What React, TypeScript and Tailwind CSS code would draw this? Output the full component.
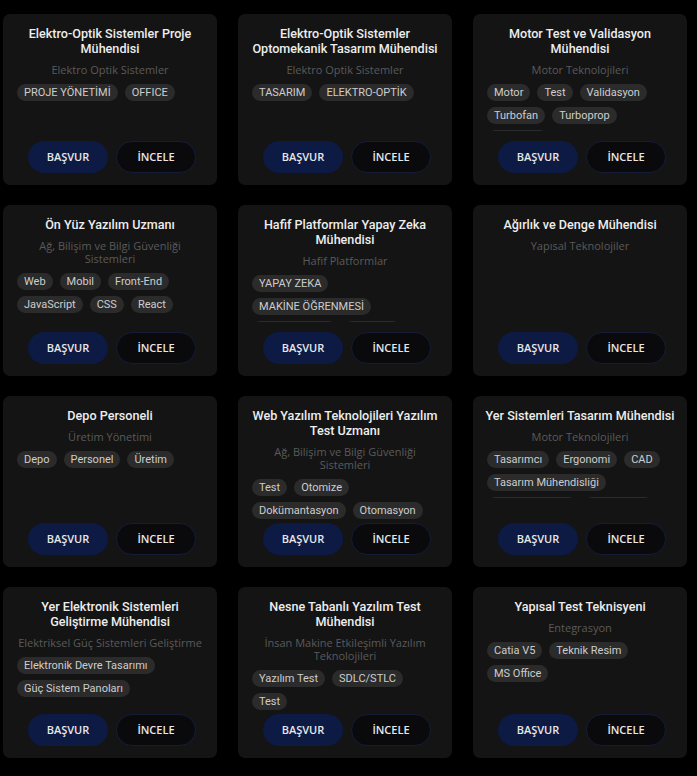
type Job = {
  title: string;
  unit: string;
  tags: string[];
};

const jobs: Job[] = [
  {
    title: "Elektro-Optik Sistemler Proje Mühendisi",
    unit: "Elektro Optik Sistemler",
    tags: ["PROJE YÖNETİMİ", "OFFICE"],
  },
  {
    title: "Elektro-Optik Sistemler Optomekanik Tasarım Mühendisi",
    unit: "Elektro Optik Sistemler",
    tags: ["TASARIM", "ELEKTRO-OPTİK"],
  },
  {
    title: "Motor Test ve Validasyon Mühendisi",
    unit: "Motor Teknolojileri",
    tags: ["Motor", "Test", "Validasyon", "Turbofan", "Turboprop", "Turboşaft"],
  },
  {
    title: "Ön Yüz Yazılım Uzmanı",
    unit: "Ağ, Bilişim ve Bilgi Güvenliği Sistemleri",
    tags: ["Web", "Mobil", "Front-End", "JavaScript", "CSS", "React"],
  },
  {
    title: "Hafif Platformlar Yapay Zeka Mühendisi",
    unit: "Hafif Platformlar",
    tags: ["YAPAY ZEKA", "MAKİNE ÖĞRENMESİ", "TENSORFLOW", "PYTHON"],
  },
  {
    title: "Ağırlık ve Denge Mühendisi",
    unit: "Yapısal Teknolojiler",
    tags: [],
  },
  {
    title: "Depo Personeli",
    unit: "Üretim Yönetimi",
    tags: ["Depo", "Personel", "Üretim"],
  },
  {
    title: "Web Yazılım Teknolojileri Yazılım Test Uzmanı",
    unit: "Ağ, Bilişim ve Bilgi Güvenliği Sistemleri",
    tags: ["Test", "Otomize", "Dokümantasyon", "Otomasyon"],
  },
  {
    title: "Yer Sistemleri Tasarım Mühendisi",
    unit: "Motor Teknolojileri",
    tags: ["Tasarımcı", "Ergonomi", "CAD", "Tasarım Mühendisliği", "Ürün Geliştirme", "SolidWorks"],
  },
  {
    title: "Yer Elektronik Sistemleri Geliştirme Mühendisi",
    unit: "Elektriksel Güç Sistemleri Geliştirme",
    tags: ["Elektronik Devre Tasarımı", "Güç Sistem Panoları"],
  },
  {
    title: "Nesne Tabanlı Yazılım Test Mühendisi",
    unit: "İnsan Makine Etkileşimli Yazılım Teknolojileri",
    tags: ["Yazılım Test", "SDLC/STLC", "Test"],
  },
  {
    title: "Yapısal Test Teknisyeni",
    unit: "Entegrasyon",
    tags: ["Catia V5", "Teknik Resim", "MS Office"],
  },
];

function JobCard({ job }: { job: Job }) {
  return (
    <div className="h-[171px] flex flex-col rounded-[7px] bg-[#141414] pt-[12px] pb-[12px]">
      {/* TITLE */}
      <h3 className="px-[10px] text-center text-[12.6px] leading-[15px] font-medium text-[#ededed] font-['Roboto',sans-serif]">
        {job.title}
      </h3>

      {/* UNIT */}
      <p className="mt-[7px] px-[11px] text-center text-[11px] leading-[13px] text-[#5a5a5a] font-['Open_Sans',sans-serif]">
        {job.unit}
      </p>

      {/* TAGS */}
      {job.tags.length > 0 && (
        <div className="mt-[8px] mx-[14px] min-h-0 max-h-[47px] shrink overflow-hidden flex flex-wrap content-start gap-x-[7px] gap-y-[6px]">
          {job.tags.map((tag) => (
            <span
              key={tag}
              className="h-[17px] px-[7px] rounded-full bg-[#2b2b2b] text-[11px] leading-[17px] text-[#cdcdcd] font-['Roboto',sans-serif] whitespace-nowrap"
            >
              {tag}
            </span>
          ))}
        </div>
      )}

      {/* ACTIONS */}
      <div className="mt-auto pt-[4px] pl-[4px] flex justify-center gap-[8px] shrink-0">
        <button className="w-[80px] h-[32px] rounded-full bg-[#0c1a44] text-[11px] font-semibold text-[#e8e8e8] font-['Open_Sans',sans-serif]">
          BAŞVUR
        </button>
        <button className="w-[80px] h-[32px] rounded-full border border-[#141c38] bg-[#0a0a0d] text-[11px] font-semibold text-[#e8e8e8] font-['Open_Sans',sans-serif]">
          İNCELE
        </button>
      </div>
    </div>
  );
}

export default function App() {
  return (
    <div className="min-h-screen bg-black pl-[3px] pt-[14px]">
      <div className="grid grid-cols-[214px_214px_214px] gap-x-[21px] gap-y-[20px]">
        {jobs.map((job, i) => (
          <JobCard key={i} job={job} />
        ))}
      </div>
    </div>
  );
}
